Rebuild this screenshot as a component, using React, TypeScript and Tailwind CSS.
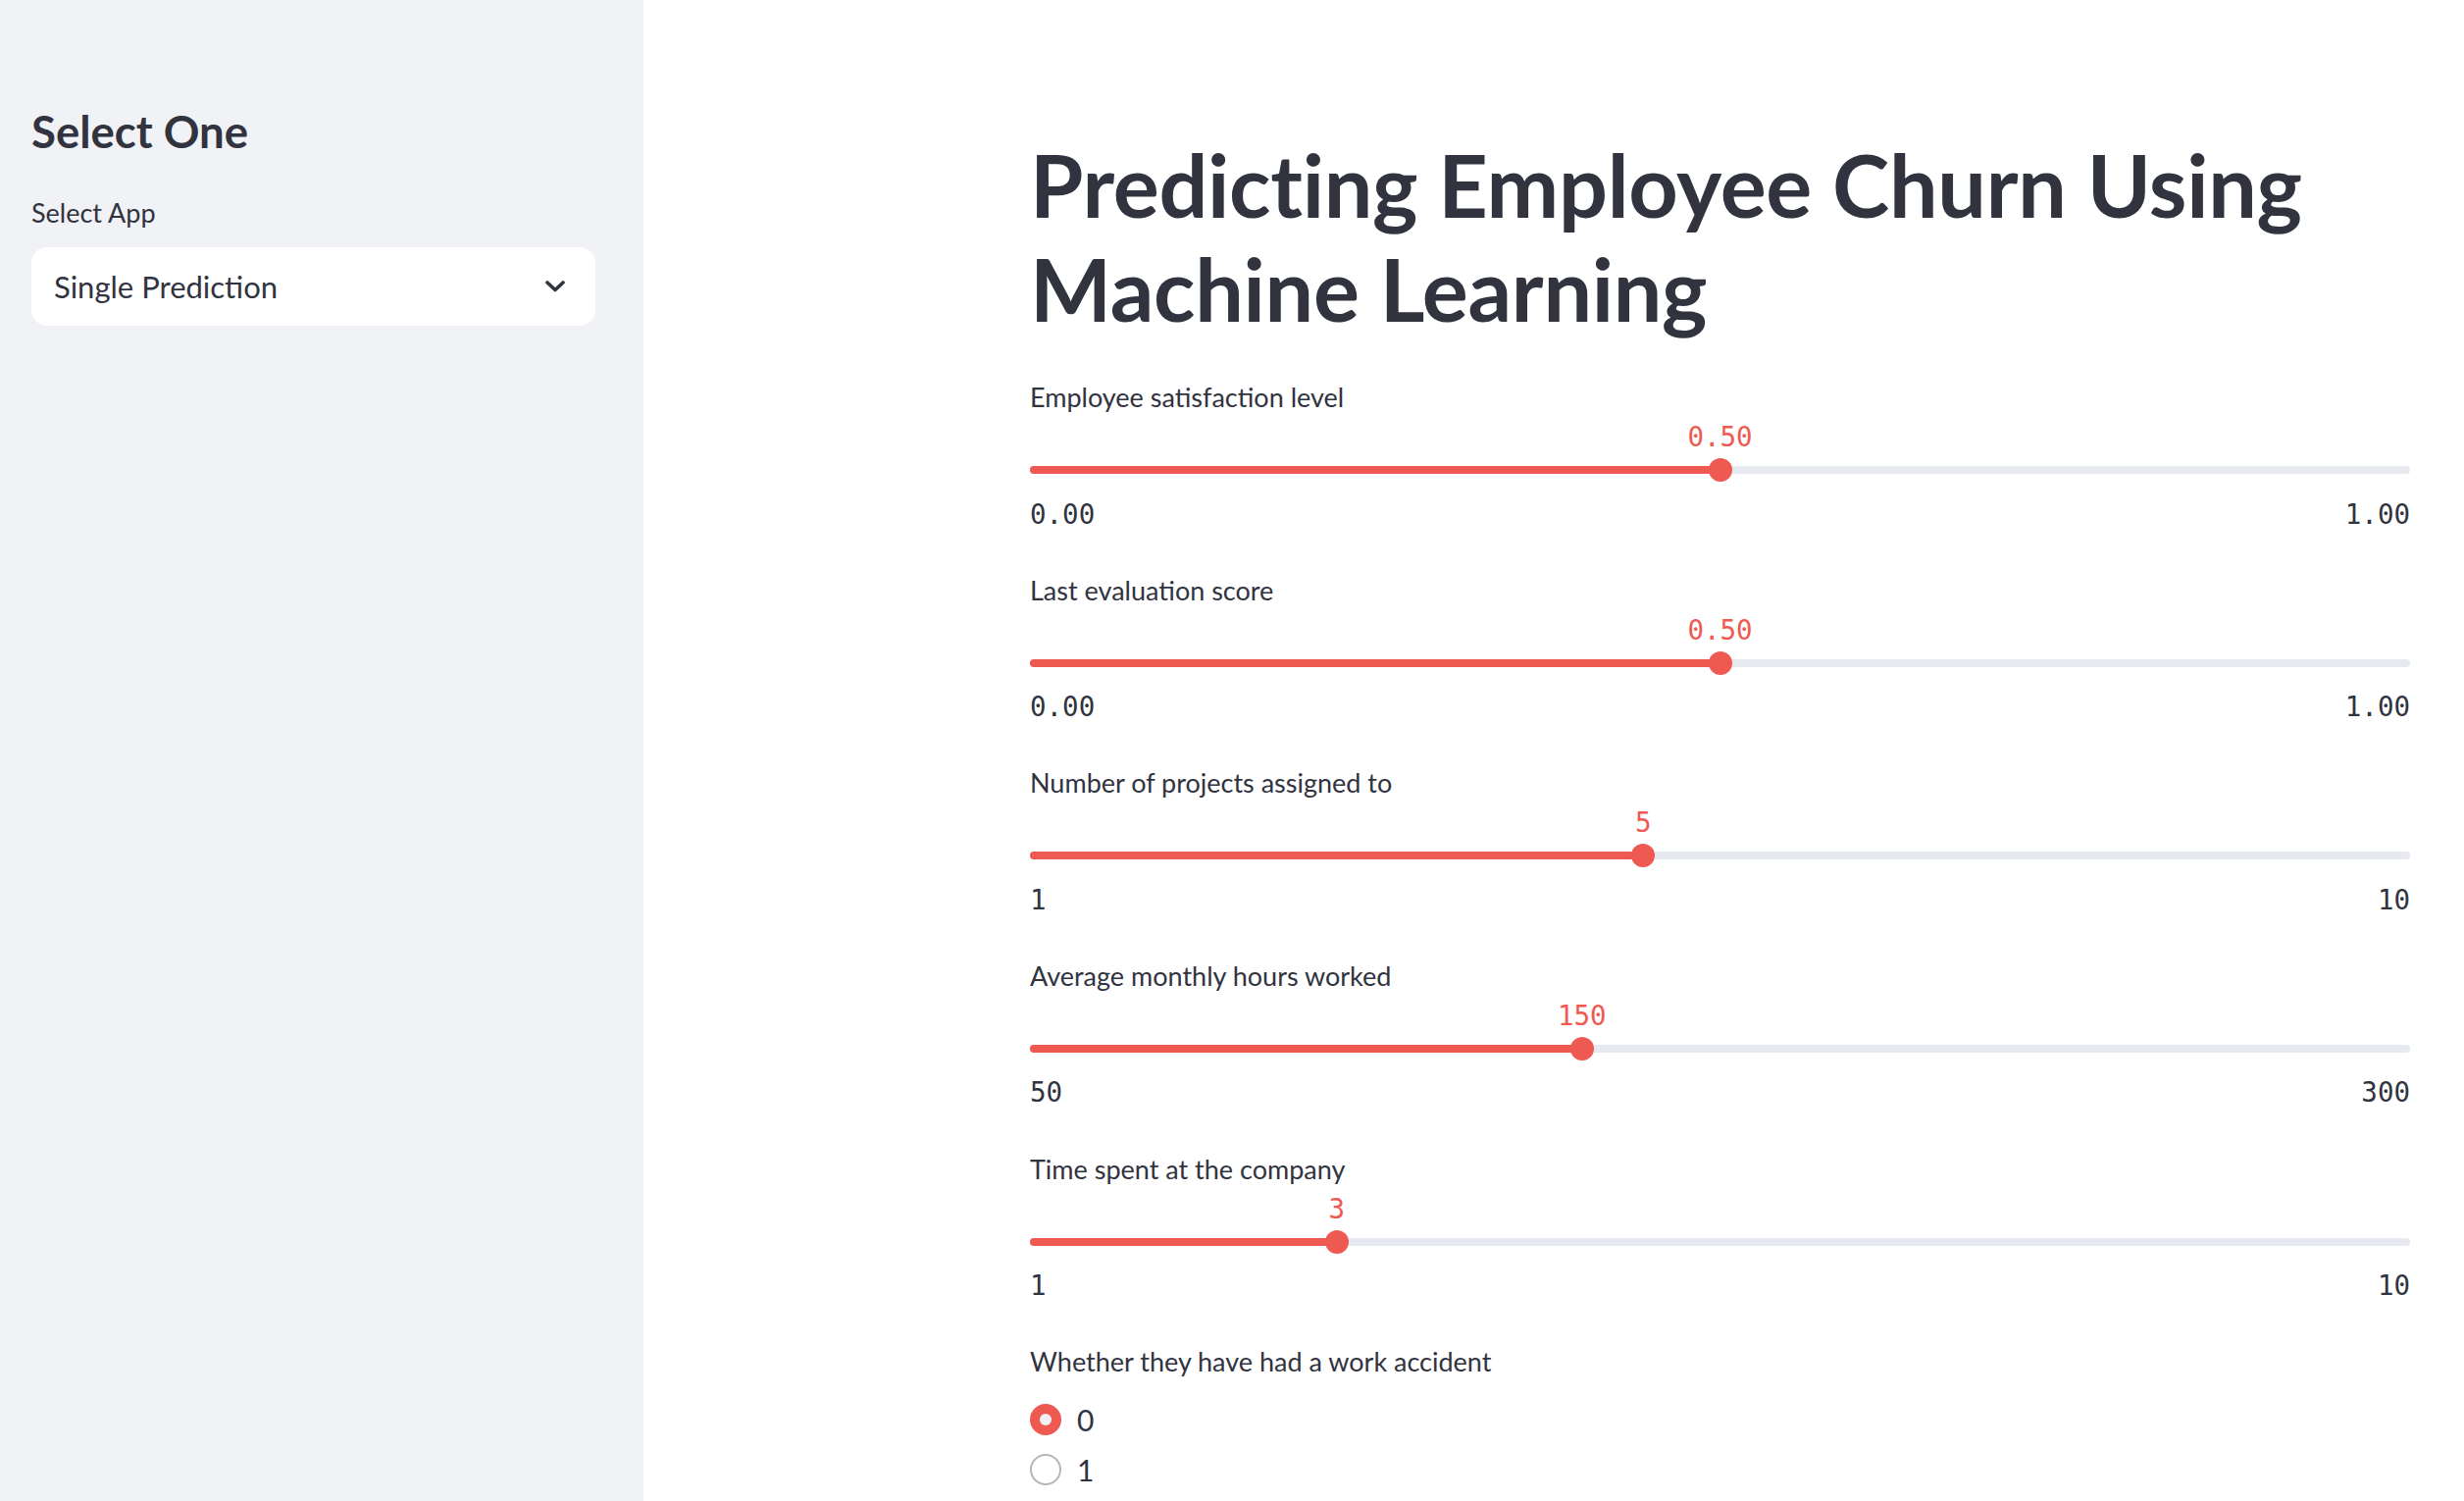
import React from "react";

const sliders = [
  { label: "Employee satisfaction level", min: "0.00", max: "1.00", value: "0.50", frac: 0.5 },
  { label: "Last evaluation score", min: "0.00", max: "1.00", value: "0.50", frac: 0.5 },
  { label: "Number of projects assigned to", min: "1", max: "10", value: "5", frac: 4 / 9 },
  { label: "Average monthly hours worked", min: "50", max: "300", value: "150", frac: 0.4 },
  { label: "Time spent at the company", min: "1", max: "10", value: "3", frac: 2 / 9 },
];

const sans = "font-['Lato','Noto_Sans',sans-serif]";
const mono = "font-['DejaVu_Sans_Mono','Liberation_Mono',monospace]";

function Slider({ label, min, max, value, frac }: { label: string; min: string; max: string; value: string; frac: number }) {
  const pct = `${frac * 100}%`;
  return (
    <div className="h-[196.6px]">
      <div className="h-[40px] text-[27px] leading-[40px] text-[#31333f]">{label}</div>
      <div className="relative h-[41px]">
        <div
          className={`absolute top-0 -translate-x-1/2 text-[27.5px] leading-[41px] text-[#ee5a52] ${mono}`}
          style={{ left: pct }}
        >
          {value}
        </div>
      </div>
      <div className="relative flex h-[26px] items-center">
        <div className="relative h-[8px] w-full rounded-full bg-[#e6e9ef]">
          <div className="absolute left-0 top-0 h-[8px] rounded-full bg-[#ee5a52]" style={{ width: pct }} />
        </div>
        <div
          className="absolute top-[1px] h-[24px] w-[24px] -translate-x-1/2 rounded-full bg-[#ee5a52]"
          style={{ left: pct }}
        />
      </div>
      <div className={`flex h-[64px] items-center justify-between text-[27.5px] text-[#31333f] ${mono}`}>
        <span>{min}</span>
        <span>{max}</span>
      </div>
    </div>
  );
}

export default function App() {
  return (
    <div className={`flex h-[1530px] w-[2512px] overflow-hidden bg-white text-[#31333f] ${sans}`}>
      <aside className="h-full w-[656px] shrink-0 bg-[#f0f2f6] pl-[32px]">
        <div className="pt-[106px]">
          <h2 className="text-[45.5px] font-bold leading-[56px] text-[#31333f]">Select One</h2>
          <div className="mt-[35px] h-[40px] text-[27px] leading-[40px] text-[#31333f]">Select App</div>
          <div className="mt-[15px] flex h-[80px] w-[575px] items-center justify-between rounded-[16px] bg-white pl-[23px] pr-[31px]">
            <span className="text-[31px] text-[#31333f]">Single Prediction</span>
            <svg width="20" height="12" viewBox="0 0 20 12" fill="none">
              <polyline points="2,2 10,9.5 18,2" stroke="#31333f" strokeWidth="3.6" strokeLinecap="round" strokeLinejoin="round" />
            </svg>
          </div>
        </div>
      </aside>
      <main className="h-full flex-1 pl-[394px]">
        <div className="w-[1407px] pt-[136px]">
          <h1 className="text-[88px] font-bold leading-[105.6px] tracking-[-0.3px] text-[#31333f]">
            Predicting Employee Churn Using Machine Learning
          </h1>
          <div className="mt-[38px]">
            {sliders.map((s) => (
              <Slider key={s.label} {...s} />
            ))}
          </div>
          <div>
            <div className="h-[40px] text-[27px] leading-[40px] text-[#31333f]">Whether they have had a work accident</div>
            <div className="mt-[13px]">
              <div className="flex h-[51px] items-center gap-[16px]">
                <div className="flex h-[32px] w-[32px] items-center justify-center rounded-full bg-[#ee5a52]">
                  <div className="h-[12px] w-[12px] rounded-full bg-[#f0f2f6]" />
                </div>
                <span className="text-[30px] leading-none text-[#31333f]">0</span>
              </div>
              <div className="flex h-[51px] items-center gap-[16px]">
                <div className="h-[32px] w-[32px] rounded-full border-[2px] border-[#b5b5b5] bg-white" />
                <span className="text-[30px] leading-none text-[#31333f]">1</span>
              </div>
            </div>
          </div>
        </div>
      </main>
    </div>
  );
}
